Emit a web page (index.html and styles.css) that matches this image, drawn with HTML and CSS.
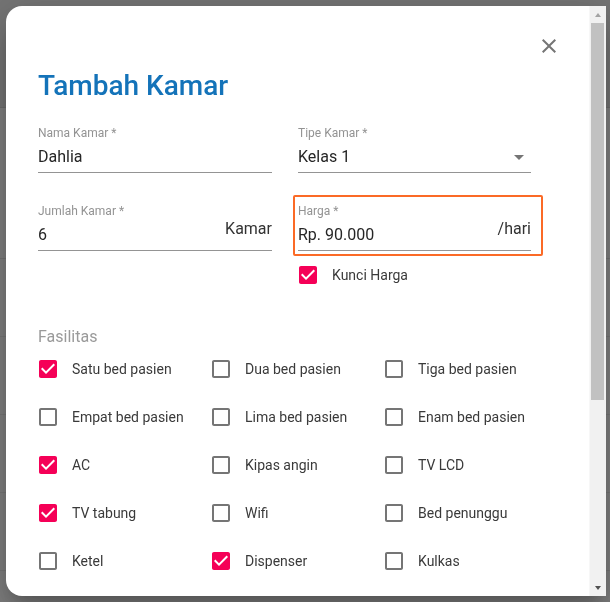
FILE: index.html
```html
<!DOCTYPE html>
<html lang="id">
<head>
<meta charset="utf-8">
<title>Tambah Kamar</title>
<link rel="stylesheet" href="styles.css">
</head>
<body>
<div class="page">
  <header class="page-header"></header>
  <main class="page-main">
    <div class="page-title-bar"></div>
    <div class="page-row"></div>
    <div class="page-row"></div>
    <div class="page-row"></div>
    <div class="page-row"></div>
  </main>
</div>
<div class="backdrop"></div>

<div class="dialog" role="dialog" aria-labelledby="dlg-title">
  <div class="dialog-content">
    <div class="dialog-head">
      <button class="close-btn" type="button" aria-label="Tutup">
        <svg viewBox="0 0 24 24" width="24" height="24"><path d="M19 6.41L17.59 5 12 10.59 6.41 5 5 6.41 10.59 12 5 17.59 6.41 19 12 13.41 17.59 19 19 17.59 13.41 12z"/></svg>
      </button>
    </div>
    <h1 class="dialog-title" id="dlg-title">Tambah Kamar</h1>

    <div class="field-row">
      <div class="field">
        <label class="field-label">Nama Kamar *</label>
        <div class="field-input"><span class="field-value">Dahlia</span></div>
      </div>
      <div class="field">
        <label class="field-label">Tipe Kamar *</label>
        <div class="field-input field-select">
          <span class="field-value">Kelas 1</span>
          <svg class="select-arrow" viewBox="0 0 24 24" width="24" height="24"><path d="M7 10l5 5 5-5z"/></svg>
        </div>
      </div>
    </div>

    <div class="field-row field-row-2">
      <div class="field">
        <label class="field-label">Jumlah Kamar *</label>
        <div class="field-input"><span class="field-value">6</span><span class="adornment">Kamar</span></div>
      </div>
      <div class="field-col">
        <div class="highlight">
          <div class="field">
            <label class="field-label">Harga *</label>
            <div class="field-input"><span class="field-value">Rp. 90.000</span><span class="adornment">/hari</span></div>
          </div>
        </div>
        <div class="check-item kunci">
          <svg class="cb on" viewBox="0 0 24 24" width="24" height="24"><path d="M19 3H5c-1.11 0-2 .9-2 2v14c0 1.1.89 2 2 2h14c1.11 0 2-.9 2-2V5c0-1.1-.89-2-2-2zm-9 14l-5-5 1.41-1.41L10 14.17l7.59-7.590L19 8l-9 9z"/></svg>
          <span class="check-label">Kunci Harga</span>
        </div>
      </div>
    </div>

    <div class="section-label">Fasilitas</div>
    <div class="check-grid">
      <div class="check-item"><svg class="cb on" viewBox="0 0 24 24" width="24" height="24"><path d="M19 3H5c-1.11 0-2 .9-2 2v14c0 1.1.89 2 2 2h14c1.11 0 2-.9 2-2V5c0-1.1-.89-2-2-2zm-9 14l-5-5 1.41-1.41L10 14.17l7.59-7.59L19 8l-9 9z"/></svg><span class="check-label">Satu bed pasien</span></div>
      <div class="check-item"><svg class="cb" viewBox="0 0 24 24" width="24" height="24"><path d="M19 5v14H5V5h14m0-2H5c-1.1 0-2 .9-2 2v14c0 1.1.9 2 2 2h14c1.1 0 2-.9 2-2V5c0-1.1-.9-2-2-2z"/></svg><span class="check-label">Dua bed pasien</span></div>
      <div class="check-item"><svg class="cb" viewBox="0 0 24 24" width="24" height="24"><path d="M19 5v14H5V5h14m0-2H5c-1.1 0-2 .9-2 2v14c0 1.1.9 2 2 2h14c1.1 0 2-.9 2-2V5c0-1.1-.9-2-2-2z"/></svg><span class="check-label">Tiga bed pasien</span></div>

      <div class="check-item"><svg class="cb" viewBox="0 0 24 24" width="24" height="24"><path d="M19 5v14H5V5h14m0-2H5c-1.1 0-2 .9-2 2v14c0 1.1.9 2 2 2h14c1.1 0 2-.9 2-2V5c0-1.1-.9-2-2-2z"/></svg><span class="check-label">Empat bed pasien</span></div>
      <div class="check-item"><svg class="cb" viewBox="0 0 24 24" width="24" height="24"><path d="M19 5v14H5V5h14m0-2H5c-1.1 0-2 .9-2 2v14c0 1.1.9 2 2 2h14c1.1 0 2-.9 2-2V5c0-1.1-.9-2-2-2z"/></svg><span class="check-label">Lima bed pasien</span></div>
      <div class="check-item"><svg class="cb" viewBox="0 0 24 24" width="24" height="24"><path d="M19 5v14H5V5h14m0-2H5c-1.1 0-2 .9-2 2v14c0 1.1.9 2 2 2h14c1.1 0 2-.9 2-2V5c0-1.1-.9-2-2-2z"/></svg><span class="check-label">Enam bed pasien</span></div>

      <div class="check-item"><svg class="cb on" viewBox="0 0 24 24" width="24" height="24"><path d="M19 3H5c-1.11 0-2 .9-2 2v14c0 1.1.89 2 2 2h14c1.11 0 2-.9 2-2V5c0-1.1-.89-2-2-2zm-9 14l-5-5 1.41-1.41L10 14.17l7.59-7.59L19 8l-9 9z"/></svg><span class="check-label">AC</span></div>
      <div class="check-item"><svg class="cb" viewBox="0 0 24 24" width="24" height="24"><path d="M19 5v14H5V5h14m0-2H5c-1.1 0-2 .9-2 2v14c0 1.1.9 2 2 2h14c1.1 0 2-.9 2-2V5c0-1.1-.9-2-2-2z"/></svg><span class="check-label">Kipas angin</span></div>
      <div class="check-item"><svg class="cb" viewBox="0 0 24 24" width="24" height="24"><path d="M19 5v14H5V5h14m0-2H5c-1.1 0-2 .9-2 2v14c0 1.1.9 2 2 2h14c1.1 0 2-.9 2-2V5c0-1.1-.9-2-2-2z"/></svg><span class="check-label">TV LCD</span></div>

      <div class="check-item"><svg class="cb on" viewBox="0 0 24 24" width="24" height="24"><path d="M19 3H5c-1.11 0-2 .9-2 2v14c0 1.1.89 2 2 2h14c1.11 0 2-.9 2-2V5c0-1.1-.89-2-2-2zm-9 14l-5-5 1.41-1.41L10 14.17l7.59-7.59L19 8l-9 9z"/></svg><span class="check-label">TV tabung</span></div>
      <div class="check-item"><svg class="cb" viewBox="0 0 24 24" width="24" height="24"><path d="M19 5v14H5V5h14m0-2H5c-1.1 0-2 .9-2 2v14c0 1.1.9 2 2 2h14c1.1 0 2-.9 2-2V5c0-1.1-.9-2-2-2z"/></svg><span class="check-label">Wifi</span></div>
      <div class="check-item"><svg class="cb" viewBox="0 0 24 24" width="24" height="24"><path d="M19 5v14H5V5h14m0-2H5c-1.1 0-2 .9-2 2v14c0 1.1.9 2 2 2h14c1.1 0 2-.9 2-2V5c0-1.1-.9-2-2-2z"/></svg><span class="check-label">Bed penunggu</span></div>

      <div class="check-item"><svg class="cb" viewBox="0 0 24 24" width="24" height="24"><path d="M19 5v14H5V5h14m0-2H5c-1.1 0-2 .9-2 2v14c0 1.1.9 2 2 2h14c1.1 0 2-.9 2-2V5c0-1.1-.9-2-2-2z"/></svg><span class="check-label">Ketel</span></div>
      <div class="check-item"><svg class="cb on" viewBox="0 0 24 24" width="24" height="24"><path d="M19 3H5c-1.11 0-2 .9-2 2v14c0 1.1.89 2 2 2h14c1.11 0 2-.9 2-2V5c0-1.1-.89-2-2-2zm-9 14l-5-5 1.41-1.41L10 14.17l7.59-7.59L19 8l-9 9z"/></svg><span class="check-label">Dispenser</span></div>
      <div class="check-item"><svg class="cb" viewBox="0 0 24 24" width="24" height="24"><path d="M19 5v14H5V5h14m0-2H5c-1.1 0-2 .9-2 2v14c0 1.1.9 2 2 2h14c1.1 0 2-.9 2-2V5c0-1.1-.9-2-2-2z"/></svg><span class="check-label">Kulkas</span></div>
    </div>
  </div>

  <div class="scrollbar" aria-hidden="true">
    <div class="sb-btn sb-up"><span class="tri-up"></span></div>
    <div class="sb-track"><div class="sb-thumb"></div></div>
    <div class="sb-btn sb-down"><span class="tri-down"></span></div>
  </div>
</div>
</body>
</html>
```

FILE: styles.css
```css
* { box-sizing: border-box; }

html, body {
  margin: 0;
  padding: 0;
  width: 610px;
  height: 602px;
  overflow: hidden;
  font-family: Roboto, "Liberation Sans", Arial, sans-serif;
}

/* underlying page (dimmed by the backdrop) */
.page {
  width: 610px;
  height: 602px;
  overflow: hidden;
  background: #ffffff;
}
.page-header {
  height: 108px;
  background: #e8e8e8;
  border-bottom: 1px solid #d8d8d8;
}
.page-title-bar {
  height: 151px;
  border-bottom: 1px solid #e6e6e6;
}
.page-row {
  height: 78px;
  border-bottom: 1px solid #ececec;
}

.backdrop {
  position: fixed;
  inset: 0;
  background: rgba(0, 0, 0, 0.5);
}

/* dialog */
.dialog {
  position: fixed;
  left: 6px;
  top: 6px;
  width: 600px;
  height: 590px;
  display: flex;
  background: #ffffff;
  border-radius: 16px 0 0 16px;
  overflow: hidden;
  box-shadow: 0 11px 15px -7px rgba(0,0,0,0.2), 0 24px 38px 3px rgba(0,0,0,0.14), 0 9px 46px 8px rgba(0,0,0,0.12);
}

.dialog-content {
  flex: 1;
  min-width: 0;
  padding: 28px 28px 0 32px;
  overflow: hidden;
}

.dialog-head {
  height: 24px;
  display: flex;
  justify-content: flex-end;
}
.close-btn {
  width: 24px;
  height: 24px;
  padding: 0;
  border: 0;
  background: none;
  display: block;
}
.close-btn svg {
  display: block;
  fill: #757575;
}

.dialog-title {
  margin: 12px 0 0;
  font-size: 28px;
  line-height: 32px;
  font-weight: 500;
  color: #1473b9;
}

/* text fields */
.field-row {
  display: flex;
  gap: 26px;
  margin-top: 23px;
}
.field-row-2 {
  margin-top: 30px;
}
.field-row > .field,
.field-row > .field-col {
  width: 234px;
}
.field-row > :last-child {
  width: 233px;
}
.field-col {
  display: flex;
  flex-direction: column;
}

.field {
  display: flex;
  flex-direction: column;
}
.field-label {
  display: block;
  height: 16px;
  padding-top: 2px;
  font-size: 12px;
  line-height: 12px;
  color: #939393;
}
.field-input {
  position: relative;
  height: 32px;
  display: flex;
  align-items: flex-start;
  border-bottom: 1px solid #949494;
}
.field-value {
  flex: 1;
  padding-top: 6px;
  font-size: 16px;
  line-height: 19px;
  color: #262626;
}
.adornment {
  font-size: 16px;
  line-height: 19px;
  color: #333333;
}
.select-arrow {
  position: absolute;
  right: 0;
  top: 4px;
  fill: #757575;
}

.highlight {
  margin: -8px -12px -5px -5px;
  padding: 6px 10px 3px 3px;
  border: 2px solid #fb6a26;
  border-radius: 2px;
}

/* checkboxes */
.check-item {
  display: flex;
  align-items: center;
  gap: 12px;
  height: 24px;
}
.cb {
  flex: none;
  display: block;
  fill: #757575;
}
.cb.on {
  fill: #f50057;
}
.check-label {
  font-size: 14px;
  line-height: 24px;
  color: #3a3a3a;
  white-space: nowrap;
}
.kunci {
  margin: 12px 0 0 -2px;
}

.section-label {
  margin-top: 38px;
  font-size: 16px;
  line-height: 24px;
  color: #9a9a9a;
}

.check-grid {
  display: grid;
  grid-template-columns: 173px 173px 1fr;
  row-gap: 24px;
  margin: 8px 0 0 -2px;
}

/* scrollbar */
.scrollbar {
  flex: none;
  width: 17px;
  display: flex;
  flex-direction: column;
  background: #f1f1f1;
  border-left: 1px solid #f7f7f7;
}
.sb-btn {
  height: 17px;
  display: flex;
  align-items: center;
  justify-content: center;
}
.tri-up {
  width: 0;
  height: 0;
  border-left: 3.5px solid transparent;
  border-right: 3.5px solid transparent;
  border-bottom: 4px solid #a3a3a3;
}
.tri-down {
  width: 0;
  height: 0;
  border-left: 3.5px solid transparent;
  border-right: 3.5px solid transparent;
  border-top: 4px solid #505050;
}
.sb-track {
  flex: 1;
  padding: 0 2px 0 1px;
}
.sb-thumb {
  height: 377px;
  background: #c1c1c1;
}
```
